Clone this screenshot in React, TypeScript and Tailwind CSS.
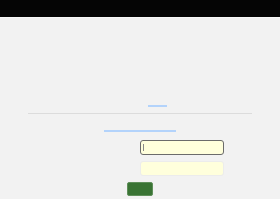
import React from "react";

export default function App() {
  return (
    <div className="w-[280px] h-[210px] bg-white flex flex-col" style={{ fontFamily: '"Liberation Sans", sans-serif' }}>
      <div className="h-[17px] bg-[#050505]" />
      <div className="h-px bg-[#f9f9f9]" />
      <div className="h-[181px] bg-[#f2f2f2] flex flex-col items-start">
        <div className="mt-[87px] ml-[148px] w-[19px] h-[2px] bg-[#b3d3fb]" />
        <div className="mt-[6px] ml-[28px] w-[224px] h-px bg-[#dcdcdc]" />
        <div className="mt-[16px] ml-[104px] w-[72px] h-[2px] bg-[#b3d3fb]" />
        <div className="mt-[8px] ml-[140px] w-[84px] h-[15px] rounded-[3px] border border-[#6b6b6b] bg-[#ffffdc] flex items-center pl-[2px]">
          <div className="w-px h-[7px] bg-[#888]" />
        </div>
        <div className="mt-[6px] ml-[140px] w-[84px] h-[15px] rounded-[3px] border border-[#ececec] bg-[#ffffdc]" />
        <div className="mt-[6px] ml-[127px] w-[26px] h-[14px] rounded-[2px] border border-[#5f8f5a] bg-[#3a7434]" />
      </div>
    </div>
  );
}
